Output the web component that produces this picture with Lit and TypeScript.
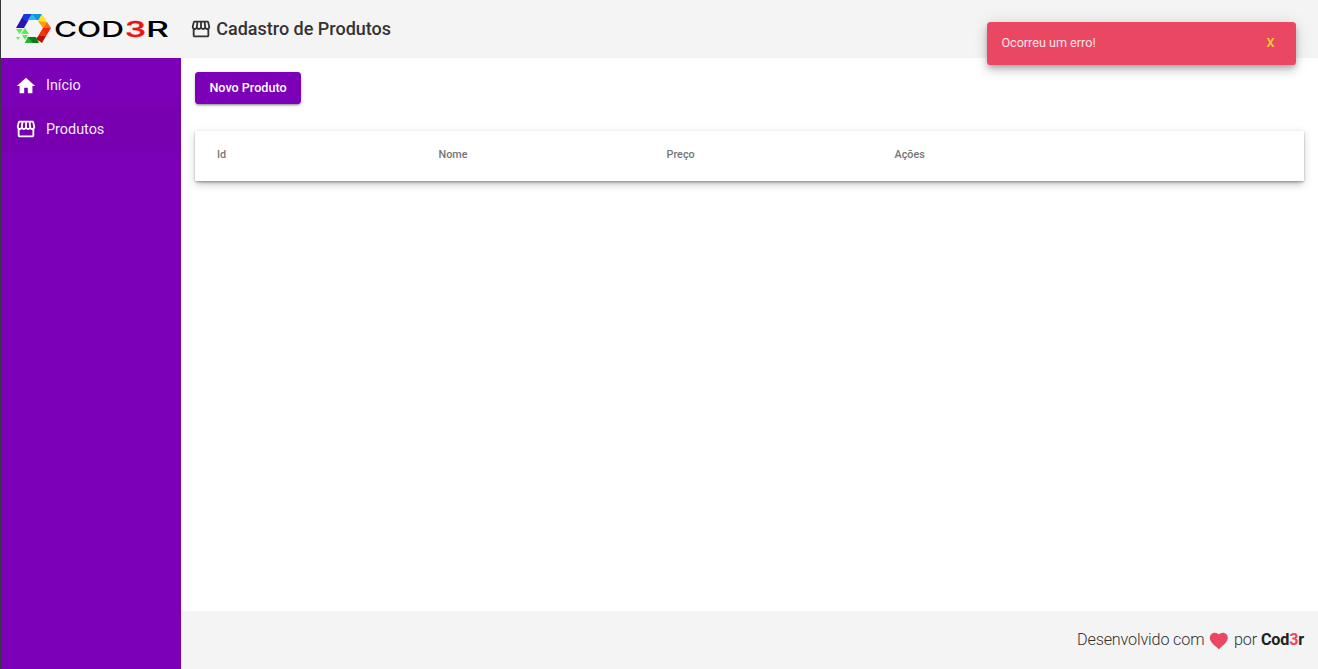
import { LitElement, html, css, svg } from "lit";
import { customElement } from "lit/decorators.js";

const storefront = svg`<path d="M21.9 8.89l-1.05-4.37c-.22-.9-1-1.52-1.91-1.52H5.05c-.9 0-1.69.63-1.9 1.52L2.1 8.89c-.24 1.02-.02 2.06.62 2.88.08.11.19.19.28.29V19c0 1.1.9 2 2 2h14c1.1 0 2-.9 2-2v-6.94c.09-.09.2-.18.28-.28.64-.82.87-1.87.62-2.89zm-2.99-3.9l1.05 4.37c.1.42.01.84-.25 1.17-.14.18-.44.47-.94.47-.61 0-1.14-.49-1.21-1.14L16.98 5l1.93-.01zM13 5h1.96l.54 4.52c.05.39-.07.78-.33 1.07-.22.26-.54.41-.95.41-.67 0-1.22-.59-1.22-1.31V5zM8.49 9.52L9.04 5H11v4.69c0 .72-.55 1.31-1.29 1.31-.34 0-.65-.15-.89-.41-.25-.29-.37-.68-.33-1.07zm-4.45-.16L5.05 5h1.97l-.58 4.86c-.08.65-.6 1.14-1.21 1.14-.49 0-.8-.29-.93-.47-.27-.32-.36-.75-.26-1.17zM5 19v-6.03c.08.01.15.03.23.03.87 0 1.66-.36 2.24-.95.6.6 1.4.95 2.31.95.87 0 1.65-.36 2.23-.93.59.57 1.39.93 2.29.93.84 0 1.64-.35 2.24-.95.58.59 1.37.95 2.24.95.08 0 .15-.02.23-.03V19H5z"/>`;
const home = svg`<path d="M10 20v-6h4v6h5v-8h3L12 3 2 12h3v8z"/>`;
const heart = svg`<path d="M12 21.35l-1.45-1.32C5.4 15.36 2 12.28 2 8.5 2 5.42 4.42 3 7.5 3c1.74 0 3.41.81 4.5 2.09C13.09 3.81 14.76 3 16.5 3 19.58 3 22 5.42 22 8.5c0 3.78-3.4 6.86-8.55 11.54L12 21.35z"/>`;

@customElement("app-root")
export class AppRoot extends LitElement {
  static styles = css`
    :host {
      display: block;
      height: 669px;
      font-family: Roboto, "Liberation Sans", sans-serif;
      background: #fff;
      color: #212121;
    }
    * { box-sizing: border-box; }
    .shell {
      display: grid;
      grid-template-columns: 180px 1fr;
      grid-template-rows: 58px 1fr 58px;
      height: 669px;
      border-left: 1px solid #38353c;
      overflow: hidden;
    }
    svg { display: block; fill: currentColor; flex: none; }
    header {
      grid-column: 1 / 3;
      display: flex;
      align-items: center;
      background: #f4f4f4;
    }
    .logo { width: 154px; height: 32px; margin: 0 0 2px 13.5px; color: #000; }
    .logo text {
      font: 500 21.3px Inter, sans-serif;
    }
    .title {
      display: flex;
      align-items: center;
      margin-left: 21.5px;
      color: #333;
      font-size: 18px;
      font-weight: 500;
      line-height: 28px;
    }
    .title svg { width: 22px; height: 22px; margin-right: 4.2px; }
    aside {
      grid-row: 2 / 4;
      background: #7b00b7;
      color: #fff;
      padding-top: 6px;
      font-size: 14.4px;
    }
    .item {
      display: flex;
      align-items: center;
      height: 43px;
      padding: 0 14px;
      color: #f6eafb;
    }
    .item + .item { height: 44px; background: #7800b0; }
    .item svg { width: 22px; height: 22px; margin-right: 9px; color: #fff; }
    main { padding: 14px 14px 0; }
    button {
      display: block;
      width: 106px;
      height: 32px;
      padding: 0 0 2px;
      border: 0;
      border-radius: 3.6px;
      background: #7b00b7;
      color: #fff;
      font: 500 12.6px Roboto, sans-serif;
      box-shadow: 0 3px 1px -2px rgba(0,0,0,.2), 0 2px 2px 0 rgba(0,0,0,.14), 0 1px 5px 0 rgba(0,0,0,.12);
    }
    .table {
      display: grid;
      grid-template-columns: 221.5px 228px 228px 1fr;
      align-items: center;
      height: 50px;
      margin-top: 27px;
      padding: 0 22px 4px;
      background: #fff;
      color: #757575;
      font-size: 10.8px;
      font-weight: 500;
      box-shadow: 0 5px 5px -3px rgba(0,0,0,.2), 0 1px 2px rgba(0,0,0,.28), 0 3px 9px 1px rgba(0,0,0,.12);
    }
    footer {
      display: flex;
      align-items: center;
      justify-content: flex-end;
      background: #f4f4f4;
      padding: 0 14px 2px 0;
      font-size: 16.2px;
      font-weight: 300;
      color: #333;
      letter-spacing: -.17px;
    }
    footer svg { width: 21.6px; height: 21.6px; margin: 4px 4px 0; color: #ea4763; }
    footer strong { margin-left: 4px; font-weight: 700; color: #212121; letter-spacing: -.2px; }
    .three { color: #ea4763; }
    .toast {
      position: absolute;
      left: 987px;
      top: 22px;
      width: 309px;
      height: 43px;
      padding: 0 21.5px 3px 14.4px;
      display: flex;
      align-items: center;
      justify-content: space-between;
      border-radius: 3.6px;
      background: #ea4763;
      color: #fbe4e9;
      font-size: 12.6px;
      box-shadow: 0 3px 5px -1px rgba(0,0,0,.2), 0 6px 10px 0 rgba(0,0,0,.14), 0 1px 16px 0 rgba(0,0,0,.12);
    }
    .close { color: #ffd62e; font-weight: 500; }
  `;

  render() {
    return html`
      <div class="shell">
        <header>
          <svg class="logo" viewBox="0 0 154 32">
            <polygon fill="#2a12b4" points="9,2 17,2 9,16 1,16"/>
            <polygon fill="#173bd8" points="9,2 17,2 12,10 7,6"/>
            <polygon fill="#0798df" points="17,2 27,2 24,8 13,8"/>
            <polygon fill="#27b9ee" points="17,2 22,8 13,8"/>
            <polygon fill="#ffe51c" points="27,2 32,10 23,9"/>
            <polygon fill="#ff9b10" points="32,10 28,16 23,9"/>
            <polygon fill="#f56a0c" points="32,10 36,16 28,16"/>
            <polygon fill="#ed280d" points="28,16 36,16 31,24 24,23"/>
            <polygon fill="#b91208" points="24,23 31,24 27,31 21,27"/>
            <polygon fill="#f13b08" points="28,16 31,24 24,23"/>
            <polygon fill="#0c7b18" points="13,25 21,25 24,31 10,31"/>
            <polygon fill="#23b52b" points="13,25 18,31 10,31"/>
            <path fill="#58ed58" d="M1 17h7l-3.500 5zM10 16l4 6H6zM7 23h6l-3 5zM1 25h4l-2 3z"/>
            <text x="39" y="24.500" textLength="70" lengthAdjust="spacingAndGlyphs">COD</text>
            <text x="110" y="24.500" textLength="21" lengthAdjust="spacingAndGlyphs" fill="#ed1015" stroke="#ed1015" stroke-width=".4">3</text>
            <text x="131" y="24.500" textLength="23" lengthAdjust="spacingAndGlyphs">R</text>
          </svg>
          <div class="title"><svg viewBox="0 0 24 24">${storefront}</svg>Cadastro de Produtos</div>
        </header>
        <aside>
          <div class="item"><svg viewBox="0 0 24 24">${home}</svg>Início</div>
          <div class="item"><svg viewBox="0 0 24 24">${storefront}</svg>Produtos</div>
        </aside>
        <main>
          <button>Novo Produto</button>
          <div class="table"><span>Id</span><span>Nome</span><span>Preço</span><span>Ações</span></div>
        </main>
        <footer>
          <span>Desenvolvido com</span><svg viewBox="0 0 24 24">${heart}</svg><span>por</span><strong>Cod<span class="three">3</span>r</strong>
        </footer>
      </div>
      <div class="toast"><span>Ocorreu um erro!</span><span class="close">X</span></div>
    `;
  }
}
